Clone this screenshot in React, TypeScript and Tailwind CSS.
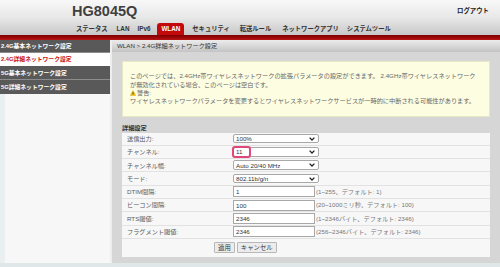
import React from "react";

const rows: { label: string; kind: "select" | "input"; value: string; hint?: string; mark?: boolean }[] = [
  { label: "送信出力:", kind: "select", value: "100%" },
  { label: "チャンネル:", kind: "select", value: "11", mark: true },
  { label: "チャンネル幅:", kind: "select", value: "Auto 20/40 MHz" },
  { label: "モード:", kind: "select", value: "802.11b/g/n" },
  { label: "DTIM間隔:", kind: "input", value: "1", hint: "(1~255、デフォルト: 1)" },
  { label: "ビーコン間隔:", kind: "input", value: "100", hint: "(20~1000ミリ秒、デフォルト: 100)" },
  { label: "RTS閾値:", kind: "input", value: "2346", hint: "(1~2346バイト、デフォルト: 2346)" },
  { label: "フラグメント閾値:", kind: "input", value: "2346", hint: "(256~2346バイト、デフォルト: 2346)" },
];

function Chevron() {
  return (
    <svg width="6" height="4" viewBox="0 0 6 4" className="shrink-0">
      <path d="M0.6 0.6 L3 3 L5.4 0.6" fill="none" stroke="#222" strokeWidth="1.3" />
    </svg>
  );
}

function Warn() {
  return (
    <svg width="6" height="6" viewBox="0 0 10 9" className="inline-block mr-[1px] align-[-1px]">
      <path d="M5 0.5 L9.6 8.5 L0.4 8.5 Z" fill="#f2c200" stroke="#c79400" strokeWidth="0.6" />
      <path d="M5 3 L5 6" stroke="#222" strokeWidth="1.2" />
      <circle cx="5" cy="7.3" r="0.6" fill="#222" />
    </svg>
  );
}

export default function App() {
  return (
    <div className="w-[500px] h-[267px] overflow-hidden flex flex-col bg-[#dfe7e9] font-[family-name:'Liberation_Sans','Noto_Sans_CJK_JP',sans-serif]">
      {/* header */}
      <header className="h-[35px] shrink-0 flex flex-col bg-linear-to-b from-[#f8f8f8] via-[#e8e8e8] to-[#c8c8c8]">
        <div className="h-[23px] flex items-start justify-between pl-[72px] pr-[11px] pt-[4px]">
          <div className="text-[14.5px] leading-[14.5px] font-bold text-[#3f3f3f]">HG8045Q</div>
          <div className="text-[6.4px] leading-[8px] font-bold text-[#222] mt-[3px]">ログアウト</div>
        </div>
        <nav className="h-[12px] flex text-[6.3px] leading-[12px] font-bold text-[#333]">
          <span className="ml-[76px]">ステータス</span>
          <span className="ml-[9px]">LAN</span>
          <span className="ml-[8px]">IPv6</span>
          <span className="ml-[7px] px-[4px] bg-[#c20a0a] text-white rounded-t-[3px]">WLAN</span>
          <span className="ml-[8px]">セキュリティ</span>
          <span className="ml-[10px]">転送ルール</span>
          <span className="ml-[11px]">ネットワークアプリ</span>
          <span className="ml-[8px]">システムツール</span>
        </nav>
      </header>
      <div className="h-[5px] shrink-0 bg-linear-to-b from-[#7d0000] to-[#b81414]" />

      {/* body */}
      <div className="flex-1 flex min-h-0">
        <aside className="w-[110px] shrink-0 flex flex-col text-[5.8px] font-bold">
          <div className="h-[13px] leading-[13px] pl-[1px] bg-[#595959] text-white border-b border-[#8c8c8c]">2.4G基本ネットワーク設定</div>
          <div className="h-[13px] leading-[13px] pl-[1px] bg-white text-[#c81414]">2.4G詳細ネットワーク設定</div>
          <div className="h-[14px] leading-[14px] pl-[1px] bg-[#595959] text-white border-b border-[#8c8c8c]">5G基本ネットワーク設定</div>
          <div className="h-[14px] leading-[14px] pl-[1px] bg-[#595959] text-white">5G詳細ネットワーク設定</div>
          <div className="flex-1 bg-[#f7f7f7] border-l-[5px] border-[#eaf0f0]" />
        </aside>
        <div className="w-[2px] shrink-0 bg-[#eeeeee]" />

        <main className="flex-1 flex flex-col min-w-0 bg-[#d6d6d6]">
          <div className="h-[12px] shrink-0 leading-[12px] pl-[5px] text-[6.2px] text-[#333] bg-linear-to-b from-[#ececec] to-[#c4c4c4]">
            WLAN &gt; 2.4G詳細ネットワーク設定
          </div>
          <div className="flex-1 px-[10px] pt-[9px] text-[6.2px]">
            <div className="bg-[#fdfde2] border border-[#e8e8c6] pl-[7px] pt-[9px] pb-[11px] text-[#666]">
              <p className="leading-[9px]">
                このページでは、2.4GHz帯ワイヤレスネットワークの拡張パラメータの設定ができます。 2.4GHz帯ワイヤレスネットワーク
                <br />
                が無効化されている場合、このページは空白です。
              </p>
              <p className="leading-[8px]">
                <Warn />
                警告:
              </p>
              <p className="leading-[8px]">ワイヤレスネットワークパラメータを変更するとワイヤレスネットワークサービスが一時的に中断される可能性があります。</p>
            </div>

            <div className="mt-[7px] leading-[8px] font-bold text-[#333]">詳細設定</div>

            <div className="mt-[0.5px] bg-[#f7f7f7]">
              {rows.map((r) => (
                <div key={r.label} className="h-[13.3px] flex items-center border-b border-[#e2e2e2]">
                  <div className="w-[111px] shrink-0 pl-[5px] text-[#5a5a5a]">{r.label}</div>
                  {r.kind === "select" ? (
                    <div className="relative w-[86px] h-[9.5px] bg-white border border-[#a8a8a8] rounded-[2px] flex items-center justify-between pl-[2px] pr-[3px] text-[#333]">
                      <span className="leading-[9px]">{r.value}</span>
                      <Chevron />
                      {r.mark && (
                        <span className="absolute left-[-2px] top-[-2.5px] w-[19px] h-[12px] rounded-[3px] border-[2px] border-[#e0487a]" />
                      )}
                    </div>
                  ) : (
                    <>
                      <div className="w-[82px] h-[11px] bg-white border border-[#a8a8a8] pl-[2px] leading-[9px] text-[#333]">{r.value}</div>
                      <span className="pl-[1px] text-[#777]">{r.hint}</span>
                    </>
                  )}
                </div>
              ))}
              <div className="h-[18px] flex items-center pl-[92px] gap-[2px]">
                <button className="h-[11px] px-[3px] bg-[#ececec] border border-[#b8b8b8] rounded-[1px] text-[6.4px] leading-[9px] text-[#333]">適用</button>
                <button className="h-[11px] px-[3px] bg-[#ececec] border border-[#b8b8b8] rounded-[1px] text-[6.4px] leading-[9px] text-[#333]">キャンセル</button>
              </div>
            </div>
          </div>
        </main>
      </div>
      <div className="h-[4px] shrink-0 bg-[#dfe7e9]" />
    </div>
  );
}
